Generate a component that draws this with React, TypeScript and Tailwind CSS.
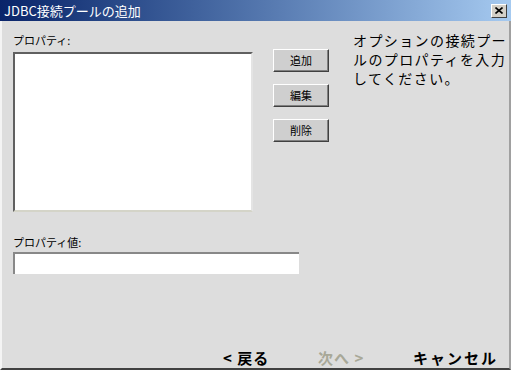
import React from "react";

const jp = { fontFamily: '"Noto Sans CJK JP", "Noto Sans", sans-serif' };

function Btn({ label }: { label: string }) {
  return (
    <div className="w-[56px] h-[23px] bg-[#cfcfcf] border border-t-white border-l-white border-r-[#404040] border-b-[#404040] flex items-center justify-center shadow-[inset_-1px_-1px_0_#808080]">
      <span className="text-[11px] leading-none text-black">{label}</span>
    </div>
  );
}

export default function App() {
  return (
    <div className="w-[511px] h-[370px] flex flex-col bg-[#dddddd] overflow-hidden" style={jp}>
      <div className="h-[21px] flex items-center justify-between bg-gradient-to-r from-[#0a246a] to-[#a6caf0] pl-[4px] pr-[4px]">
        <span className="text-white text-[13px] leading-none">JDBC接続プールの追加</span>
        <div className="w-[16px] h-[14px] bg-[#d4d0c8] border border-t-white border-l-white border-r-[#404040] border-b-[#404040] flex items-center justify-center">
          <svg width="8" height="7" viewBox="0 0 8 7">
            <path d="M0.5 0.5 L7.5 6.5 M7.5 0.5 L0.5 6.5" stroke="#000" strokeWidth="1.6" />
          </svg>
        </div>
      </div>
      <div className="flex-1 flex flex-col border-l-2 border-l-[#f4f4f4] border-r-2 border-r-[#a0a0a0] border-b-2 border-b-[#404040]">
        <div className="flex items-start pl-[11px]">
          <div className="flex flex-col w-[285px]">
            <div className="mt-[12px] h-[14px] text-[11px] leading-[14px] text-black">プロパティ:</div>
            <div className="mt-[5px] w-[240px] h-[160px] bg-white border-2 border-t-[#606060] border-l-[#606060] border-r-[#e4e4e4] border-b-[#d4d4c8]" />
            <div className="mt-[23px] h-[14px] text-[11px] leading-[14px] text-black">プロパティ値:</div>
            <div className="mt-[3px] w-[286px] h-[22px] bg-white border-t-2 border-l-2 border-t-[#888888] border-l-[#888888]" />
          </div>
          <div className="flex flex-col gap-[12px] mt-[28px] -ml-[25px]">
            <Btn label="追加" />
            <Btn label="編集" />
            <Btn label="削除" />
          </div>
          <div className="ml-[24px] mt-[10px] w-[160px] text-[14px] leading-[19px] tracking-[1.4px] text-black whitespace-nowrap">
            オプションの接続プー<br />ルのプロパティを入力<br />してください。
          </div>
        </div>
        <div className="mt-auto flex items-center h-[22px] pl-[221px] font-bold text-[15px] leading-none">
          <span className="w-[95px] text-black tracking-[1px]">&lt; 戻る</span>
          <span className="w-[95px] text-[#a8a898] tracking-[1px]">次へ &gt;</span>
          <span className="text-black tracking-[2px]">キャンセル</span>
        </div>
      </div>
    </div>
  );
}
